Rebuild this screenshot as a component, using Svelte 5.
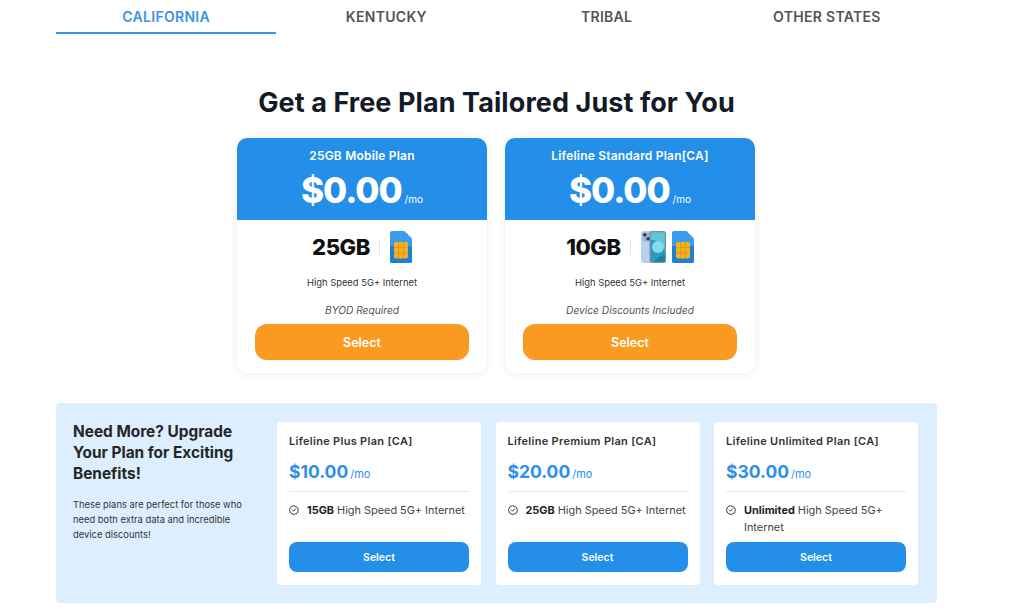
<script>
  const tabs = ['CALIFORNIA', 'KENTUCKY', 'TRIBAL', 'OTHER STATES'];
  const free = [
    { name: '25GB Mobile Plan', data: '25GB', note: 'BYOD Required', phone: false },
    { name: 'Lifeline Standard Plan[CA]', data: '10GB', note: 'Device Discounts Included', phone: true }
  ];
  const paid = [
    { name: 'Lifeline Plus Plan [CA]', price: '$10.00', bold: '15GB', rest: 'High Speed 5G+ Internet' },
    { name: 'Lifeline Premium Plan [CA]', price: '$20.00', bold: '25GB', rest: 'High Speed 5G+ Internet' },
    { name: 'Lifeline Unlimited Plan [CA]', price: '$30.00', bold: 'Unlimited', rest: 'High Speed 5G+ Internet' }
  ];
</script>

{#snippet sim()}
  <svg class="sim" viewBox="0 0 22 32" width="22" height="32" aria-hidden="true">
    <path d="M2 0H14.5L22 7.5V30a2 2 0 0 1-2 2H2a2 2 0 0 1-2-2V2a2 2 0 0 1 2-2Z" fill="#3a9cea"/>
    <path d="M0 15H22V30a2 2 0 0 1-2 2H2a2 2 0 0 1-2-2Z" fill="#1f7fd0"/>
    <rect x="4" y="11" width="14" height="16.5" rx="2" fill="#f6ae22"/>
    <path d="M8.5 11V16.5H4M13.5 11V16.5H18M4 22H8.5V27.5M18 22H13.5V27.5M8.5 16.5H13.5V22H8.5Z" fill="none" stroke="#e09414" stroke-width=".8"/>
  </svg>
{/snippet}

{#snippet phone()}
  <svg class="phone" viewBox="0 0 25 32" width="25" height="32" aria-hidden="true">
    <rect x="0" y="0" width="14" height="32" rx="2.5" fill="#b9d0f0"/>
    <rect x="1.5" y="1.5" width="8" height="9" rx="2.5" fill="#97b4dd"/>
    <circle cx="3.8" cy="3.8" r="1.8" fill="#2a3b50"/>
    <circle cx="7.2" cy="7.8" r="1.8" fill="#2a3b50"/>
    <rect x="8.5" y="0" width="16.5" height="32" rx="2.5" fill="#7f8f9e"/>
    <rect x="10" y="1.2" width="13.8" height="29.6" rx="1.6" fill="#5cc6da"/>
    <path d="M10 9C16 9 23.8 12 23.8 20V30.8H11.6a1.6 1.6 0 0 1-1.6-1.6Z" fill="#2b9bc0"/>
    <circle cx="17" cy="16" r="6" fill="#86dbe8"/>
    <path d="M13 30.8C17 26 21 24 23.8 23.5V30.8Z" fill="#1b7fa8"/>
  </svg>
{/snippet}

<main class="page">
  <nav class="tabs">
    {#each tabs as tab, i}
      <div class="tab" class:active={i === 0}>{tab}</div>
    {/each}
  </nav>

  <h1>Get a Free Plan Tailored Just for You</h1>

  <section class="free">
    {#each free as p}
      <article class="free-card">
        <header>
          <h2>{p.name}</h2>
          <div class="big-price"><em>$0.00</em><span>/mo</span></div>
        </header>
        <div class="data">
          <strong>{p.data}</strong>
          <i class="rule"></i>
          {#if p.phone}{@render phone()}{/if}
          {@render sim()}
        </div>
        <p class="speed">High Speed 5G+ Internet</p>
        <p class="note">{p.note}</p>
        <button class="orange">Select</button>
      </article>
    {/each}
  </section>

  <section class="upgrade">
    <div class="intro">
      <h3>Need More? Upgrade Your Plan for Exciting Benefits!</h3>
      <p>These plans are perfect for those who need both extra data and incredible device discounts!</p>
    </div>
    <div class="plans">
      {#each paid as p}
        <article class="plan">
          <h4>{p.name}</h4>
          <div class="price">{p.price}<span>/mo</span></div>
          <div class="feature">
            <svg viewBox="0 0 24 24" width="10" height="10" fill="none" stroke="#333" stroke-width="2.2" stroke-linecap="round" stroke-linejoin="round" aria-hidden="true">
              <path d="M12 2l2.6 1.5 3-.1 1.5 2.6 2.6 1.5-.1 3L23 12l-1.5 2.5.1 3-2.6 1.5-1.5 2.6-3-.1L12 23l-2.5-1.5-3 .1L5 19l-2.6-1.5.1-3L1 12l1.5-2.5-.1-3L5 5l1.5-2.6 3 .1Z"/>
              <path d="M8 12l3 3 5-6"/>
            </svg>
            <span><b>{p.bold}</b> {p.rest}</span>
          </div>
          <button class="blue">Select</button>
        </article>
      {/each}
    </div>
  </section>
</main>

<style>
  :global(body) {
    margin: 0;
    background: #fff;
    font-family: Inter, "Open Sans", sans-serif;
    color: #222;
  }
  .page {
    width: 881px;
    margin-left: 56px;
    height: 613px;
    overflow: hidden;
  }
  .tabs {
    display: grid;
    grid-template-columns: repeat(4, 1fr);
  }
  .tab {
    height: 32px;
    border-bottom: 2px solid transparent;
    display: flex;
    justify-content: center;
    align-items: center;
    font-size: 14px;
    font-weight: 600;
    color: #555;
    letter-spacing: .3px;
  }
  .tab.active {
    color: #3a94e8;
    border-bottom-color: #3a94e8;
  }
  h1 {
    margin: 51px 0 0;
    text-align: center;
    font-size: 27px;
    line-height: 36px;
    font-weight: 700;
    color: #141a26;
    letter-spacing: .08px;
  }
  .free {
    display: flex;
    justify-content: center;
    gap: 18px;
    margin-top: 17px;
    padding-right: 1px;
  }
  .free-card {
    width: 250px;
    height: 235px;
    border-radius: 10px;
    background: #fff;
    box-shadow: 0 1px 8px rgba(0, 0, 0, .08);
    display: flex;
    flex-direction: column;
    align-items: center;
    overflow: hidden;
  }
  .free-card header {
    width: 100%;
    height: 82px;
    background: #238fe9;
    color: #fff;
    text-align: center;
  }
  h2 {
    margin: 10px 0 0;
    font-size: 12px;
    line-height: 16px;
    font-weight: 600;
    letter-spacing: .2px;
  }
  .big-price {
    margin-top: 4px;
    font-size: 35px;
    line-height: 44px;
    font-weight: 800;
  }
  .big-price em {
    font-style: normal;
    letter-spacing: -1.1px;
  }
  .big-price span {
    font-size: 10px;
    font-weight: 400;
    margin-left: 3px;
  }
  .data {
    display: flex;
    align-items: center;
    justify-content: center;
    margin-top: 11px;
    height: 32px;
  }
  .data strong {
    font-size: 22px;
    font-weight: 800;
    color: #111;
    letter-spacing: -.4px;
  }
  .rule {
    width: 1px;
    height: 16px;
    background: #e6e6e6;
    margin: 0 10px 0 9px;
  }
  .phone { margin-right: 6px; }
  .speed, .note {
    margin: 0;
    line-height: 14px;
    color: #333;
  }
  .speed { margin-top: 13px; font-size: 9.4px; }
  .note {
    margin-top: 13px;
    font-size: 10.2px;
    font-style: italic;
    color: #555;
  }
  button {
    border: 0;
    color: #fff;
    font-family: inherit;
    font-weight: 600;
    display: block;
  }
  .orange {
    margin-top: 7px;
    width: 214px;
    height: 36px;
    padding-top: 2px;
    border-radius: 12px;
    background: #fb9a20;
    font-size: 12.5px;
  }
  .upgrade {
    margin-top: 30px;
    height: 200px;
    background: #ddefff;
    border-radius: 4px;
    display: flex;
    box-sizing: border-box;
    padding: 19px 19px 18px 17px;
  }
  .intro { width: 204px; flex: none; margin-top: -1px; }
  h3 {
    margin: 0;
    font-size: 15.4px;
    line-height: 21px;
    font-weight: 700;
    color: #262626;
    width: 180px;
  }
  .intro p {
    margin: 13px 0 0;
    font-size: 9.4px;
    line-height: 15px;
    color: #333;
    width: 178px;
  }
  .plans {
    display: flex;
    gap: 14.5px;
  }
  .plan {
    width: 204px;
    height: 163px;
    box-sizing: border-box;
    padding: 12px 12px 0;
    background: #fff;
    border-radius: 4px;
    display: flex;
    flex-direction: column;
  }
  h4 {
    margin: 0;
    font-size: 11px;
    line-height: 15px;
    font-weight: 600;
    color: #333;
    letter-spacing: .3px;
  }
  .price {
    margin-top: 11px;
    height: 31px;
    font-size: 17.5px;
    line-height: 24px;
    font-weight: 700;
    color: #2c90ea;
  }
  .price span {
    font-size: 11px;
    font-weight: 400;
    margin-left: 2px;
  }
  .feature {
    border-top: 1px solid #e9e9e9;
    padding-top: 10px;
    display: flex;
    gap: 8px;
    height: 51px;
    box-sizing: border-box;
    font-size: 10.9px;
    line-height: 17px;
    color: #444;
  }
  .feature svg { flex: none; margin-top: 3px; }
  .feature b { color: #222; font-weight: 700; }
  .blue {
    height: 30px;
    border-radius: 8px;
    background: #238fe9;
    font-size: 10.5px;
    width: 100%;
  }
</style>
